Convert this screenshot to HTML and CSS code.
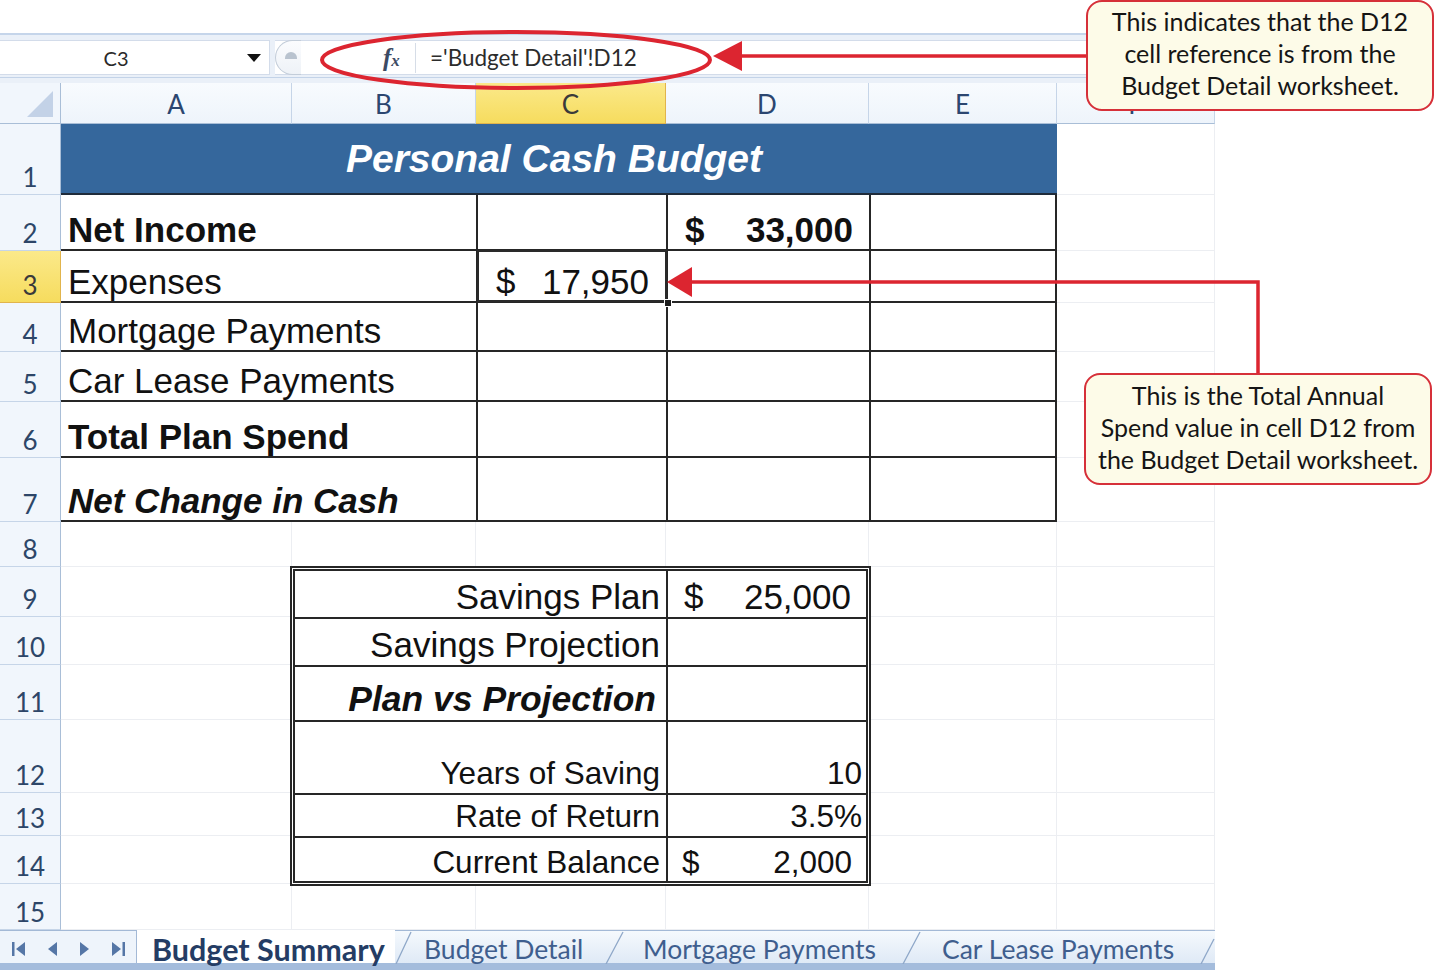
FILE: index.html
```html
<!DOCTYPE html>
<html>
<head>
<meta charset="utf-8">
<link rel="stylesheet" href="styles.css">
</head>
<body>
<div class="page">
  <div class="top-gap"></div>
  <div class="sheet">
    <div class="fbar">
      <div class="fbar-row">
        <div class="namebox"><span class="nb-text">C3</span><span class="nb-arrow"><svg width="14" height="8" viewBox="0 0 14 8"><polygon points="0,0 14,0 7,8" fill="#111"/></svg></span></div>
        <div class="fx-area">
          <div class="knob"><span class="dome"></span></div>
          <div class="fx-spacer"></div>
          <div class="fx"><span class="fx-f">f</span><span class="fx-x">x</span></div>
          <div class="fx-sep"></div>
          <div class="ftext">='Budget Detail'!D12</div>
        </div>
      </div>
      <div class="fbar-line"></div>
    </div>

    <div class="grid">
      <div class="corner"><svg width="26" height="26" viewBox="0 0 26 26"><polygon points="26,0 26,26 0,26" fill="#c3d2e7"/></svg></div>
      <div class="ch">A</div>
      <div class="ch">B</div>
      <div class="ch sel">C</div>
      <div class="ch">D</div>
      <div class="ch">E</div>
      <div class="ch chf">F</div>

      <div class="rh r1">1</div>
      <div class="rh r2">2</div>
      <div class="rh r3 sel">3</div>
      <div class="rh r4">4</div>
      <div class="rh r5">5</div>
      <div class="rh r6">6</div>
      <div class="rh r7">7</div>
      <div class="rh r8">8</div>
      <div class="rh r9">9</div>
      <div class="rh r10">10</div>
      <div class="rh r11">11</div>
      <div class="rh r12">12</div>
      <div class="rh r13">13</div>
      <div class="rh r14">14</div>
      <div class="rh r15">15</div>

      <div class="vl v2"></div>
      <div class="vl v3"></div>
      <div class="vl v4"></div>
      <div class="vl v5"></div>
      <div class="vl v6"></div>
      <div class="vl v7"></div>
      <div class="hl h2"></div>
      <div class="hl h3"></div>
      <div class="hl h4"></div>
      <div class="hl h5"></div>
      <div class="hl h6"></div>
      <div class="hl h7"></div>
      <div class="hl h8"></div>
      <div class="hl h9"></div>
      <div class="hl h10"></div>
      <div class="hl h11"></div>
      <div class="hl h12"></div>
      <div class="hl h13"></div>
      <div class="hl h14"></div>
      <div class="hl h15"></div>
      <div class="hl h16"></div>

      <div class="budget">
        <div class="title">Personal Cash Budget</div>

        <div class="cell lbl b">Net Income</div>
        <div class="cell c"></div>
        <div class="cell c acct b"><span>$</span><span>33,000</span></div>
        <div class="cell c last"></div>

        <div class="cell lbl">Expenses</div>
        <div class="cell c acct selcell"><span>$</span><span>17,950</span><i class="handle"></i></div>
        <div class="cell c"></div>
        <div class="cell c last"></div>

        <div class="cell lbl">Mortgage Payments</div>
        <div class="cell c"></div>
        <div class="cell c"></div>
        <div class="cell c last"></div>

        <div class="cell lbl">Car Lease Payments</div>
        <div class="cell c"></div>
        <div class="cell c"></div>
        <div class="cell c last"></div>

        <div class="cell lbl b">Total Plan Spend</div>
        <div class="cell c"></div>
        <div class="cell c"></div>
        <div class="cell c last"></div>

        <div class="cell lbl b i">Net Change in Cash</div>
        <div class="cell c"></div>
        <div class="cell c"></div>
        <div class="cell c last"></div>
      </div>

      <div class="savings">
        <div class="scell slbl">Savings Plan</div>
        <div class="scell sval acct"><span>$</span><span>25,000</span></div>
        <div class="scell slbl">Savings Projection</div>
        <div class="scell sval"></div>
        <div class="scell slbl b i">Plan vs Projection</div>
        <div class="scell sval"></div>
        <div class="scell slbl sm">Years of Saving</div>
        <div class="scell sval num sm">10</div>
        <div class="scell slbl sm">Rate of Return</div>
        <div class="scell sval num sm">3.5%</div>
        <div class="scell slbl sm lastrow">Current Balance</div>
        <div class="scell sval acct acct2 sm lastrow"><span>$</span><span>2,000</span></div>
      </div>
    </div>

    <div class="tabs">
      <div class="nav">
        <svg width="14" height="16" viewBox="0 0 14 16"><rect x="0" y="1" width="2.5" height="14" fill="#5576a6"/><polygon points="13,1 13,15 4,8" fill="#5576a6"/></svg>
        <svg width="11" height="16" viewBox="0 0 11 16"><polygon points="10,1 10,15 1,8" fill="#5576a6"/></svg>
        <svg width="11" height="16" viewBox="0 0 11 16"><polygon points="1,1 1,15 10,8" fill="#5576a6"/></svg>
        <svg width="14" height="16" viewBox="0 0 14 16"><polygon points="1,1 1,15 10,8" fill="#5576a6"/><rect x="11.5" y="1" width="2.5" height="14" fill="#5576a6"/></svg>
      </div>
      <div class="tab active t1">Budget Summary</div>
      <svg class="slash" width="17" height="33" viewBox="0 0 17 33"><line x1="1" y1="33" x2="16" y2="1" stroke="#8ea7c8" stroke-width="1.3"/></svg>
      <div class="tab t2">Budget Detail</div>
      <svg class="slash" width="22" height="33" viewBox="0 0 22 33"><line x1="3" y1="33" x2="20" y2="1" stroke="#8ea7c8" stroke-width="1.3"/></svg>
      <div class="tab t3">Mortgage Payments</div>
      <svg class="slash" width="22" height="33" viewBox="0 0 22 33"><line x1="3" y1="33" x2="20" y2="1" stroke="#8ea7c8" stroke-width="1.3"/></svg>
      <div class="tab t4">Car Lease Payments</div>
      <svg class="slash" width="17" height="33" viewBox="0 0 17 33"><line x1="3" y1="33" x2="16" y2="8" stroke="#8ea7c8" stroke-width="1.3"/></svg>
    </div>
  </div>

  <svg class="marks" width="1436" height="970" viewBox="0 0 1436 970">
    <ellipse cx="516" cy="60" rx="194" ry="28" fill="none" stroke="#dc2530" stroke-width="4"/>
    <line x1="738" y1="56" x2="1088" y2="56" stroke="#dc2530" stroke-width="3.5"/>
    <polygon points="713,56 742,41 742,71" fill="#dc2530"/>
    <polyline points="688,282 1258,282 1258,375" fill="none" stroke="#dc2530" stroke-width="3.5"/>
    <polygon points="667,282 692,267 692,297" fill="#dc2530"/>
  </svg>

  <div class="callout co1">This indicates that the D12<br>cell reference is from the<br>Budget Detail worksheet.</div>
  <div class="callout co2">This is the Total Annual<br>Spend value in cell D12 from<br>the Budget Detail worksheet.</div>
</div>
</body>
</html>
```

FILE: styles.css
```css
* { box-sizing: border-box; }
html, body { margin: 0; padding: 0; }
body {
  width: 1436px;
  height: 970px;
  overflow: hidden;
  background: #ffffff;
  font-family: "Liberation Sans", Arial, sans-serif;
  color: #111;
}
.page { position: relative; width: 1436px; height: 970px; }
.top-gap { height: 33px; }
.sheet { width: 1215px; }

/* formula bar */
.fbar {
  height: 50px;
  background: #eaf0f8;
  border-top: 2px solid #c5d5ea;
  padding-top: 5px;
}
.fbar-row { display: flex; height: 35px; }
.fbar-line { height: 1px; margin-top: 2px; background: #c3d3e8; }
.namebox {
  width: 270px;
  background: #fff;
  border: 1px solid #d3dcea;
  border-left: none;
  display: flex;
  align-items: center;
  font-family: Lato, "Open Sans", sans-serif;
  font-size: 20px;
  color: #2a2a2a;
}
.nb-text { width: 232px; text-align: center; }
.nb-arrow { margin-left: 15px; display: flex; }
.fx-area {
  margin-left: 5px;
  flex: 1;
  background: #fff;
  border: 1px solid #d3dcea;
  border-left: none;
  display: flex;
  align-items: center;
}
.knob {
  width: 26px;
  height: 35px;
  margin-top: -1px;
  border: 1px solid #c3cdd9;
  border-right: none;
  border-radius: 18px 0 0 18px;
  position: relative;
  background: linear-gradient(#fbfcfe, #eef2f7);
}
.dome {
  position: absolute;
  left: 9px;
  top: 11px;
  width: 12px;
  height: 7px;
  border-radius: 6px 6px 0 0;
  background: #b9c3cf;
}
.fx-spacer { width: 82px; }
.fx {
  width: 32px;
  font-family: "Liberation Serif", serif;
  font-style: italic;
  font-weight: bold;
  color: #3c4a63;
  display: flex;
  align-items: baseline;
}
.fx-f { font-size: 25px; }
.fx-x { font-size: 17px; margin-left: 0; }
.fx-sep { width: 1px; height: 30px; background: #d6dde7; }
.ftext {
  padding-left: 14px;
  font-family: Lato, "Open Sans", sans-serif;
  font-size: 22.5px;
  color: #2c2c2c;
}

/* grid */
.grid {
  display: grid;
  grid-template-columns: 61px 231px 184px 190px 203px 188px 158px;
  grid-template-rows: 41px 71px 56px 52px 49px 50px 56px 64px 45px 50px 48px 55px 73px 43px 48px 46px;
}
.corner {
  grid-row: 1; grid-column: 1;
  background: #f1f6fc;
  border-right: 1px solid #a9bed7;
  border-bottom: 1px solid #a9bed7;
  display: flex;
  justify-content: flex-end;
  align-items: flex-end;
  padding: 0 7px 6px 0;
}
.ch {
  grid-row: 1;
  background: linear-gradient(#f8fbfe, #eef4fb);
  border-right: 1px solid #c6d5e8;
  border-bottom: 1px solid #a9bed7;
  display: flex;
  align-items: center;
  justify-content: center;
  font-family: Lato, "Open Sans", sans-serif;
  font-size: 26px;
  color: #2b4670;
  padding-top: 2px;
}
.ch.chf { align-items: flex-end; padding-top: 0; line-height: 1; padding-bottom: 6px; }
.ch.sel {
  background: linear-gradient(#fbe98a, #f6dc5e);
  border-right: 1px solid #e1b44c;
  border-bottom: 1px solid #e1b44c;
  color: #3a3a3a;
}
.rh {
  grid-column: 1;
  background: #f1f6fc;
  border-right: 1px solid #a9bed7;
  border-bottom: 1px solid #c6d5e8;
  display: flex;
  align-items: flex-end;
  justify-content: center;
  font-family: Lato, "Open Sans", sans-serif;
  font-size: 26px;
  line-height: 1;
  color: #2d4668;
  padding-bottom: 4px;
}
.rh.sel {
  background: linear-gradient(#fbe98a, #f6dc5e);
  border-right: 1px solid #e1b44c;
  border-bottom: 1px solid #e1b44c;
  color: #3a3a3a;
}
.r1 { grid-row: 2; } .r2 { grid-row: 3; } .r3 { grid-row: 4; } .r4 { grid-row: 5; }
.r5 { grid-row: 6; } .r6 { grid-row: 7; } .r7 { grid-row: 8; } .r8 { grid-row: 9; }
.r9 { grid-row: 10; } .r10 { grid-row: 11; } .r11 { grid-row: 12; } .r12 { grid-row: 13; }
.r13 { grid-row: 14; } .r14 { grid-row: 15; } .r15 { grid-row: 16; }

.vl { grid-row: 2 / 17; border-right: 1px solid #eceef2; }
.v2 { grid-column: 2; } .v3 { grid-column: 3; } .v4 { grid-column: 4; }
.v5 { grid-column: 5; } .v6 { grid-column: 6; } .v7 { grid-column: 7; }
.hl { grid-column: 2 / 8; border-bottom: 1px solid #eceef2; }
.h2 { grid-row: 2; } .h3 { grid-row: 3; } .h4 { grid-row: 4; } .h5 { grid-row: 5; }
.h6 { grid-row: 6; } .h7 { grid-row: 7; } .h8 { grid-row: 8; } .h9 { grid-row: 9; }
.h10 { grid-row: 10; } .h11 { grid-row: 11; } .h12 { grid-row: 12; } .h13 { grid-row: 13; }
.h14 { grid-row: 14; } .h15 { grid-row: 15; } .h16 { grid-row: 16; }

/* budget table */
.budget {
  grid-column: 2 / 7;
  grid-row: 2 / 9;
  display: grid;
  grid-template-columns: 231px 184px 190px 203px 188px;
  grid-template-rows: 71px 56px 52px 49px 50px 56px 64px;
  background: #fff;
}
.title {
  grid-column: 1 / -1;
  background: #35679c;
  border-bottom: 2px solid #1f2b3a;
  color: #fff;
  font-weight: bold;
  font-style: italic;
  font-size: 39px;
  display: flex;
  align-items: center;
  justify-content: center;
  padding-top: 1px;
  padding-right: 10px;
}
.cell {
  display: flex;
  align-items: flex-end;
  border-bottom: 2px solid #262626;
  font-size: 35px;
  line-height: 1;
  padding: 0 7px 2px;
  white-space: nowrap;
}
.lbl { grid-column: span 2; }
.c { border-left: 2px solid #262626; }
.c.last { border-right: 2px solid #262626; }
.b { font-weight: bold; font-size: 35px; }
.i { font-style: italic; }
.acct { justify-content: space-between; padding-left: 17px; padding-right: 16px; }
.selcell { position: relative; padding-left: 18px; padding-right: 17px; }
.selcell::after {
  content: "";
  position: absolute;
  left: -1px; top: -1px; right: -1px; bottom: -1px;
  border: 2px solid #2a2a2a;
  box-shadow: inset 0 0 0 1px #fff;
  pointer-events: none;
}
.handle {
  position: absolute;
  right: -6px;
  bottom: -6px;
  width: 8px;
  height: 8px;
  background: #1d1d1d;
  border: 1px solid #fff;
  z-index: 2;
}

/* savings table */
.savings {
  grid-column: 3 / 6;
  grid-row: 10 / 16;
  margin: -1px -2px -2px -2px;
  border: 5px double #262626;
  background: #fff;
  display: grid;
  grid-template-columns: 371px 1fr;
  grid-template-rows: 48px 48px 55px 73px 43px 1fr;
}
.scell {
  display: flex;
  align-items: flex-end;
  border-bottom: 2px solid #262626;
  font-size: 35px;
  line-height: 1;
  padding-bottom: 3px;
  white-space: nowrap;
}
.scell.sm { font-size: 31.5px; padding-bottom: 4px; }
.scell.lastrow { border-bottom: none; padding-bottom: 3px; }
.slbl { justify-content: flex-end; padding-right: 6px; }
.slbl.b { font-size: 35.5px; padding-right: 10px; }
.sval { border-left: 2px solid #262626; padding-left: 16px; padding-right: 15px; }
.sval.num { justify-content: flex-end; padding-right: 4px; }
.sval.acct2 { padding-left: 14px; padding-right: 14px; }

/* tabs */
.tabs {
  height: 40px;
  display: flex;
  align-items: stretch;
  background: linear-gradient(#f5f9fd, #dfe9f6);
  border-top: 1px solid #a3b9d6;
  border-bottom: 7px solid #a4bcdc;
  font-family: Lato, "Open Sans", sans-serif;
  font-size: 26.5px;
  color: #3f5e8e;
}
.nav {
  width: 137px;
  display: flex;
  align-items: center;
  gap: 21px;
  padding-left: 12px;
  padding-top: 3px;
  background: #eef4fb;
  border-right: 1px solid #a3b9d6;
}
.tab {
  display: flex;
  align-items: center;
  padding-top: 4px;
  white-space: nowrap;
}
.tab.active {
  background: #fff;
  font-weight: bold;
  font-size: 30.5px;
  color: #243c64;
  margin-top: -1px;
}
.t1 { width: 258px; padding-left: 15px; }
.t2 { width: 191px; padding-left: 12px; }
.t3 { width: 275px; padding-left: 18px; }
.t4 { width: 276px; padding-left: 20px; }
.slash { flex: none; display: block; }

/* overlays */
.marks { position: absolute; left: 0; top: 0; pointer-events: none; }
.callout {
  position: absolute;
  width: 348px;
  background: #fdfbe8;
  border: 2px solid #d63039;
  border-radius: 16px;
  font-family: Lato, "Open Sans", sans-serif;
  font-size: 25px;
  line-height: 32px;
  text-align: center;
  color: #151515;
  padding-top: 3px;
}
.co1 { left: 1086px; top: 0; height: 111px; }
.co2 { left: 1084px; top: 373px; height: 112px; padding-top: 4px; }
```
